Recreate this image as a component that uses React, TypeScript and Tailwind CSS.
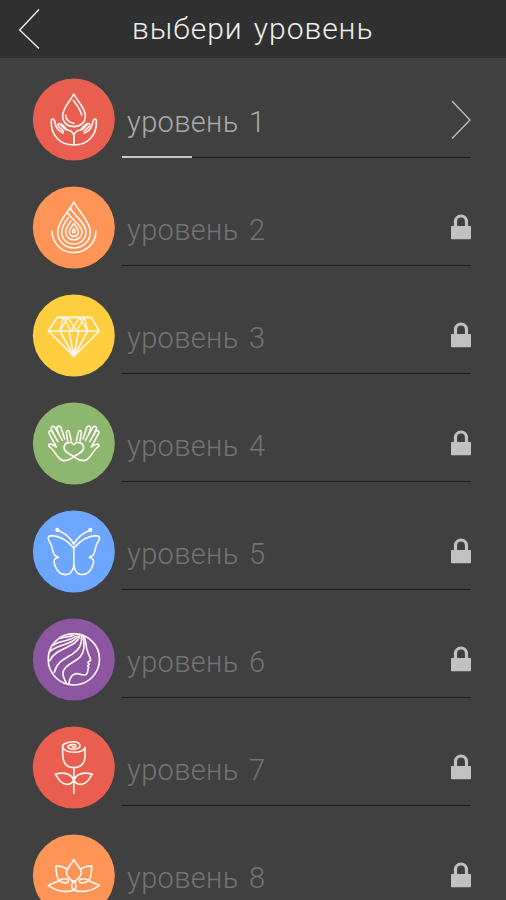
import type { ReactNode } from 'react';

// Every badge is drawn on a 276 unit grid, three units to a pixel.
const mirror = 'matrix(-1 0 0 1 275 0)';

function Both({ children }: { children: ReactNode }) {
  return (
    <>
      <g>{children}</g>
      <g transform={mirror}>{children}</g>
    </>
  );
}

const dropInHands = (
  <>
    <path d="M137.5 60C128 80 104 101 104 125C104 145 118 158 137.5 158C157 158 172 145 172 125C172 101 147 80 137.5 60Z" />
    <path d="M136 79C146 92 158 107 161 123M113 123C114 137 123 146 138 148" />
    <Both>
      <path d="M137.5 213C96 213 67 184 70 138C71 134 77 134 79 139L84 157C88 166 96 173 106 177" />
      <path d="M137.5 213V185C135 174 129 169 117 168C112 161 107 153 98 149C91 147 87 152 91 157L106 171M98 153L112 166" />
    </Both>
  </>
);

const ripple = (
  <>
    <path d="M72 147C73 184 101 212 137.5 212C174 212 203 184 204 147" />
    <path d="M137.5 60C127 83 89 118 89 150C89 177 111 198 137.5 198C164 198 187 177 187 150C187 118 148 83 137.5 60Z" />
    <path d="M127 79C141 103 174 124 174 150C174 170 158 186 137.5 186C117 186 101 170 101 150C101 134 110 121 121 107" />
    <path d="M118 92C133 115 162 130 162 150C162 163 151 174 137.5 174C124 174 113 163 113 150C113 138 121 128 129 117" />
    <path d="M137.5 124C144 134 151 140 151 150C151 157 145 163 137.5 163C130 163 124 157 124 150C124 140 131 134 137.5 124Z" />
    <path d="M137.5 140C132 147 132 152 137.5 152C143 152 143 147 137.5 140Z" />
  </>
);

const diamond = (
  <>
    <path d="M87 82H189L214 123L137.5 199L61 123ZM61 123H214" />
    <path d="M96 123L120 82L146 123L169 82M179 123L155 82L129 123L106 82M106 82L96 123M169 82L179 123" strokeWidth="4" />
    <path d="M96 123L137.5 199L179 123M123 123L137.5 199L152 123" />
  </>
);

const heartHands = (
  <Both>
    <path d="M137.5 140C131 130 111 131 108 147C107 162 124 167 137.5 176C146 183 156 188 168 188" />
    <path d="M107 188C87 186 84 159 63 145C60 139 67 137 73 140L85 147L63 106C60 99 67 95 72 101L90 131" />
    <path d="M80 114L70 93C67 86 77 82 81 89L103 127" />
    <path d="M93 109L87 93C85 85 95 81 99 89L110 122" />
    <path d="M119 129L115 104C114 97 122 95 124 103L130 129" />
  </Both>
);

const butterfly = (
  <>
    <Both>
      <circle cx="88" cy="72" r="4" fill="white" />
      <path d="M89 73C110 81 127 95 137.5 114" />
      <path d="M137.5 126C120 106 96 90 72 89C59 89 58 98 64 106C75 120 71 134 79 146C83 151 88 152 91 154C78 156 76 164 80 176C86 194 99 206 114 206C128 206 134 196 137.5 179" />
    </Both>
    <path d="M137.5 122V179" />
  </>
);

const profile = (
  <>
    <circle cx="137.5" cy="136" r="77" />
    <path d="M168 66C176 84 173 102 179 113C181 121 187 131 188 138C187 142 179 142 180 146L184 151L179 155L182 160C178 164 181 170 178 177C174 187 162 183 154 180C135 174 124 190 123 211" />
    <path d="M165 66C170 89 170 112 158 127C143 146 112 148 105 174C103 184 108 194 115 207" />
    <path d="M160 66C164 90 153 108 132 121C111 134 87 143 79 175" />
    <path d="M155 66C147 101 86 98 65 140" />
    <path d="M150 66C137 93 82 91 64 114" />
    <path d="M144 66C126 83 100 77 75 94M137 63C127 70 111 68 98 73" />
  </>
);

const rose = (
  <>
    <path d="M104 74C104 102 100 136 137.5 137C175 136 172 103 171 76C169 95 109 97 104 74C100 61 151 51 156 70C158 85 120 85 120 74C121 67 144 65 144 72C143 77 135 76 133 74" />
    <path d="M137.5 137V214" />
    <Both>
      <path d="M137.5 179C134 154 106 149 82 157C91 168 96 186 116 187C128 188 137 181 137.5 165" />
    </Both>
  </>
);

const lotus = (
  <>
    <path d="M137.5 88C132 105 114 113 115 128C116 140 128 150 137.5 157C147 150 159 140 160 128C161 113 143 105 137.5 88Z" />
    <Both>
      <path d="M116 117C106 108 94 109 83 108C87 122 82 140 94 152C103 160 120 161 121 154C120 145 106 144 96 150C85 158 73 159 61 166C76 177 91 184 110 184C126 185 144 183 144 167C144 160 142 156 137.5 153" />
    </Both>
  </>
);

const levels = [
  { id: 1, color: '#ea5e50', icon: dropInHands },
  { id: 2, color: '#ff9457', icon: ripple },
  { id: 3, color: '#ffce3e', icon: diamond },
  { id: 4, color: '#8db66e', icon: heartHands },
  { id: 5, color: '#6da6ff', icon: butterfly },
  { id: 6, color: '#8c56a1', icon: profile },
  { id: 7, color: '#ea5e50', icon: rose },
  { id: 8, color: '#ff9457', icon: lotus },
];

function Badge({ color, children }: { color: string; children: ReactNode }) {
  return (
    <svg className="h-[92px] w-[92px] shrink-0" viewBox="0 0 276 276" fill="none" stroke="#fff7f2" strokeWidth="4.9" strokeLinecap="round" strokeLinejoin="round">
      <circle cx="137.5" cy="136.5" r="123" fill={color} stroke="none" />
      {children}
    </svg>
  );
}

function Lock() {
  return (
    <svg className="mt-[6px] h-[26px] w-5" viewBox="0 0 20 26" fill="none">
      <path d="M4.5 13V7.5a5.5 5.5 0 0 1 11 0V13" stroke="#c1c1c1" strokeWidth="3.2" />
      <rect y="12" width="20" height="13.3" rx="0.8" fill="#c1c1c1" />
    </svg>
  );
}

export default function App() {
  return (
    <div className="h-[900px] w-[506px] overflow-hidden bg-[#404040] font-['Roboto',sans-serif] font-light">
      <header className="flex h-[58px] items-center bg-[#303030] pl-[18px]">
        <svg className="h-[42px] w-[23px]" viewBox="0 0 23 42" fill="none" stroke="#eeeeee" strokeWidth="1.4">
          <path d="M21 1.5L1.7 22L21 40.5" />
        </svg>
        <h1 className="ml-[91px] whitespace-pre text-[30px] leading-[58px] tracking-[0.95px] text-[#eeeeee] [word-spacing:3px]">выбери уровень</h1>
      </header>

      <main className="flex flex-col gap-4 pt-4">
        {levels.map(({ id, color, icon }) => {
          const open = id === 1;
          return (
            <div key={id} className="flex shrink-0 pl-7">
              <Badge color={color}>{icon}</Badge>
              <div className="relative ml-0.5 flex h-[84px] w-[349px] items-center justify-between border-b border-[#1d1d1d] pl-[5px]">
                <span className={`mt-3.5 whitespace-pre text-[29px] tracking-[0.35px] [word-spacing:3px] ${open ? 'text-[#aaaaaa]' : 'text-[#737373]'}`}>
                  уровень {id}
                </span>
                {open ? (
                  <svg className="mt-[9px] h-10 w-5" viewBox="0 0 20 40" fill="none" stroke="#bbbbbb" strokeWidth="1.3">
                    <path d="M1 1L19 20L1 38.5" />
                  </svg>
                ) : (
                  <Lock />
                )}
                {/* progress through the level */}
                {open && <div className="absolute -bottom-px left-0 h-0.5 w-[70px] bg-[#c9c9c9]" />}
              </div>
            </div>
          );
        })}
      </main>
    </div>
  );
}
